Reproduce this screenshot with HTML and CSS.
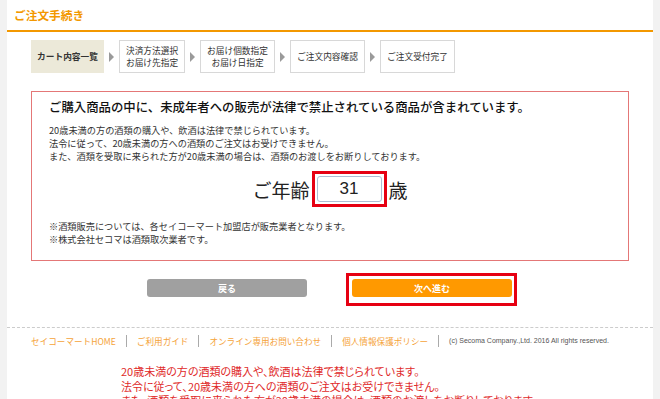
FILE: index.html
```html
<!DOCTYPE html>
<html lang="ja">
  <head>
    <meta charset="UTF-8" />
    <meta name="viewport" content="width=device-width, initial-scale=1.0" />
    <title>ご注文手続き</title>
    <link rel="stylesheet" href="styles.css">
  </head>
  <body>
    <div class="page">
      <div class="head">
        <h1>ご注文手続き</h1>
      </div>

      <div class="steps">
        <div class="step current">カート内容一覧</div>
        <span class="arrow"></span>
        <div class="step s2">決済方法選択<br />お届け先指定</div>
        <span class="arrow"></span>
        <div class="step">お届け個数指定<br />お届け日指定</div>
        <span class="arrow"></span>
        <div class="step">ご注文内容確認</div>
        <span class="arrow"></span>
        <div class="step">ご注文受付完了</div>
      </div>

      <div class="alert">
        <h2>ご購入商品の中に、未成年者への販売が法律で禁止されている商品が含まれています。</h2>
        <p class="lead">
          20歳未満の方の酒類の購入や、飲酒は法律で禁じられています。<br />
          法令に従って、20歳未満の方への酒類のご注文はお受けできません。<br />
          また、酒類を受取に来られた方が20歳未満の場合は、酒類のお渡しをお断りしております。
        </p>
        <div class="age">
          <span>ご年齢</span>
          <span class="mark age-mark"><input type="text" id="age" value="31" /></span>
          <span>歳</span>
        </div>
        <p class="notes">
          ※酒類販売については、各セイコーマート加盟店が販売業者となります。<br />
          ※株式会社セコマは酒類取次業者です。
        </p>
      </div>

      <div class="actions">
        <button class="btn back">戻る</button>
        <span class="mark btn-mark"><button class="btn next">次へ進む</button></span>
      </div>

      <div class="foot">
        <div class="links">
          <a href="#">セイコーマートHOME</a>
          <span class="sep"></span>
          <a href="#">ご利用ガイド</a>
          <span class="sep"></span>
          <a href="#">オンライン専用お問い合わせ</a>
          <span class="sep"></span>
          <a href="#">個人情報保護ポリシー</a>
          <span class="sep"></span>
          <span class="copy">(c) Secoma Company.,Ltd. 2016 All rights reserved.</span>
        </div>
        <p class="notice">
          20歳未満の方の酒類の購入や、飲酒は法律で禁じられています。<br />
          法令に従って、20歳未満の方への酒類のご注文はお受けできません。<br />
          また、酒類を受取に来られた方が20歳未満の場合は、酒類のお渡しをお断りしております。
        </p>
      </div>
    </div>
  </body>
</html>
```

FILE: styles.css
```css
body {
  margin: 0;
  background: #f2f2f2;
  font-family: "Noto Sans CJK JP", sans-serif;
  color: #333;
}
.page {
  width: 646px;
  margin: 0 auto;
  background: white;
  min-height: 399px;
}
.head {
  height: 30px;
  border-bottom: 2px solid #f39800;
  padding-left: 7px;
}
.head h1 {
  margin: 0;
  font-size: 11.7px;
  line-height: 30px;
  color: #f39800;
  font-weight: bold;
}
.steps {
  display: flex;
  margin-top: 8px;
  padding-left: 24px;
  height: 33px;
}
.step {
  box-sizing: border-box;
  width: 75px;
  height: 33px;
  border: 1px solid #d8d8d8;
  display: flex;
  align-items: center;
  justify-content: center;
  text-align: center;
  font-size: 8.7px;
  line-height: 12px;
  color: #333;
}
.step.current {
  width: 73px;
  background: #ece9d9;
  border-color: #ece9d9;
  font-weight: bold;
}
.step.s2 {
  width: 66px;
}
.arrow {
  width: 15px;
  display: flex;
  align-items: center;
  justify-content: center;
}
.arrow::before {
  content: "";
  border-left: 5px solid #9a9a9a;
  border-top: 5px solid transparent;
  border-bottom: 5px solid transparent;
}
.alert {
  box-sizing: border-box;
  width: 598px;
  height: 170px;
  margin: 18px 0 0 24px;
  border: 1px solid #e47777;
  padding: 6px 17px 0;
}
.alert h2 {
  margin: 0;
  font-size: 12.4px;
  line-height: 18px;
  font-weight: 500;
  color: #111;
}
.lead,
.notes {
  margin: 8px 0 0;
  font-size: 9.2px;
  line-height: 13px;
  color: #333;
}
.age {
  display: flex;
  align-items: center;
  justify-content: center;
  gap: 2px;
  margin-top: 8px;
  font-size: 19px;
  color: #222;
}
.mark {
  border: 3px solid #e60012;
  display: inline-block;
}
.age-mark {
  padding: 2px;
  line-height: 0;
}
.age-mark input {
  box-sizing: border-box;
  width: 65px;
  height: 26px;
  border: 1px solid #aebdd3;
  border-radius: 3px;
  text-align: center;
  font-family: "Liberation Sans", Arial, sans-serif;
  font-size: 17px;
  color: #222;
  padding: 0;
}
.notes {
  margin-top: 13px;
}
.actions {
  display: flex;
  align-items: flex-start;
  gap: 39px;
  margin-top: 12px;
  padding-left: 140px;
}
.btn {
  width: 160px;
  height: 18px;
  border: none;
  border-radius: 3px;
  color: white;
  font-family: "Noto Sans CJK JP", sans-serif;
  font-size: 9px;
  font-weight: bold;
  padding: 0;
  cursor: pointer;
}
.back {
  background: #a0a0a0;
  margin-top: 6px;
}
.btn-mark {
  padding: 3px 2px 6px 3px;
  line-height: 0;
}
.next {
  background: #ff9900;
}
.foot {
  margin-top: 21px;
  border-top: 1px dashed #cccccc;
}
.links {
  display: flex;
  align-items: center;
  padding: 5px 0 0 24px;
  height: 15px;
  font-size: 8.6px;
}
.links a {
  color: #f5a33a;
  text-decoration: none;
}
.sep {
  width: 1px;
  height: 12px;
  background: #aaa;
  margin: 0 10px;
}
.copy {
  font-family: "Liberation Sans", Arial, sans-serif;
  font-size: 7px;
  color: #555;
}
.notice {
  margin: 16px 0 0 114px;
  font-size: 11px;
  line-height: 14.5px;
  color: #e02a2a;
  font-feature-settings: "palt";
}
```
